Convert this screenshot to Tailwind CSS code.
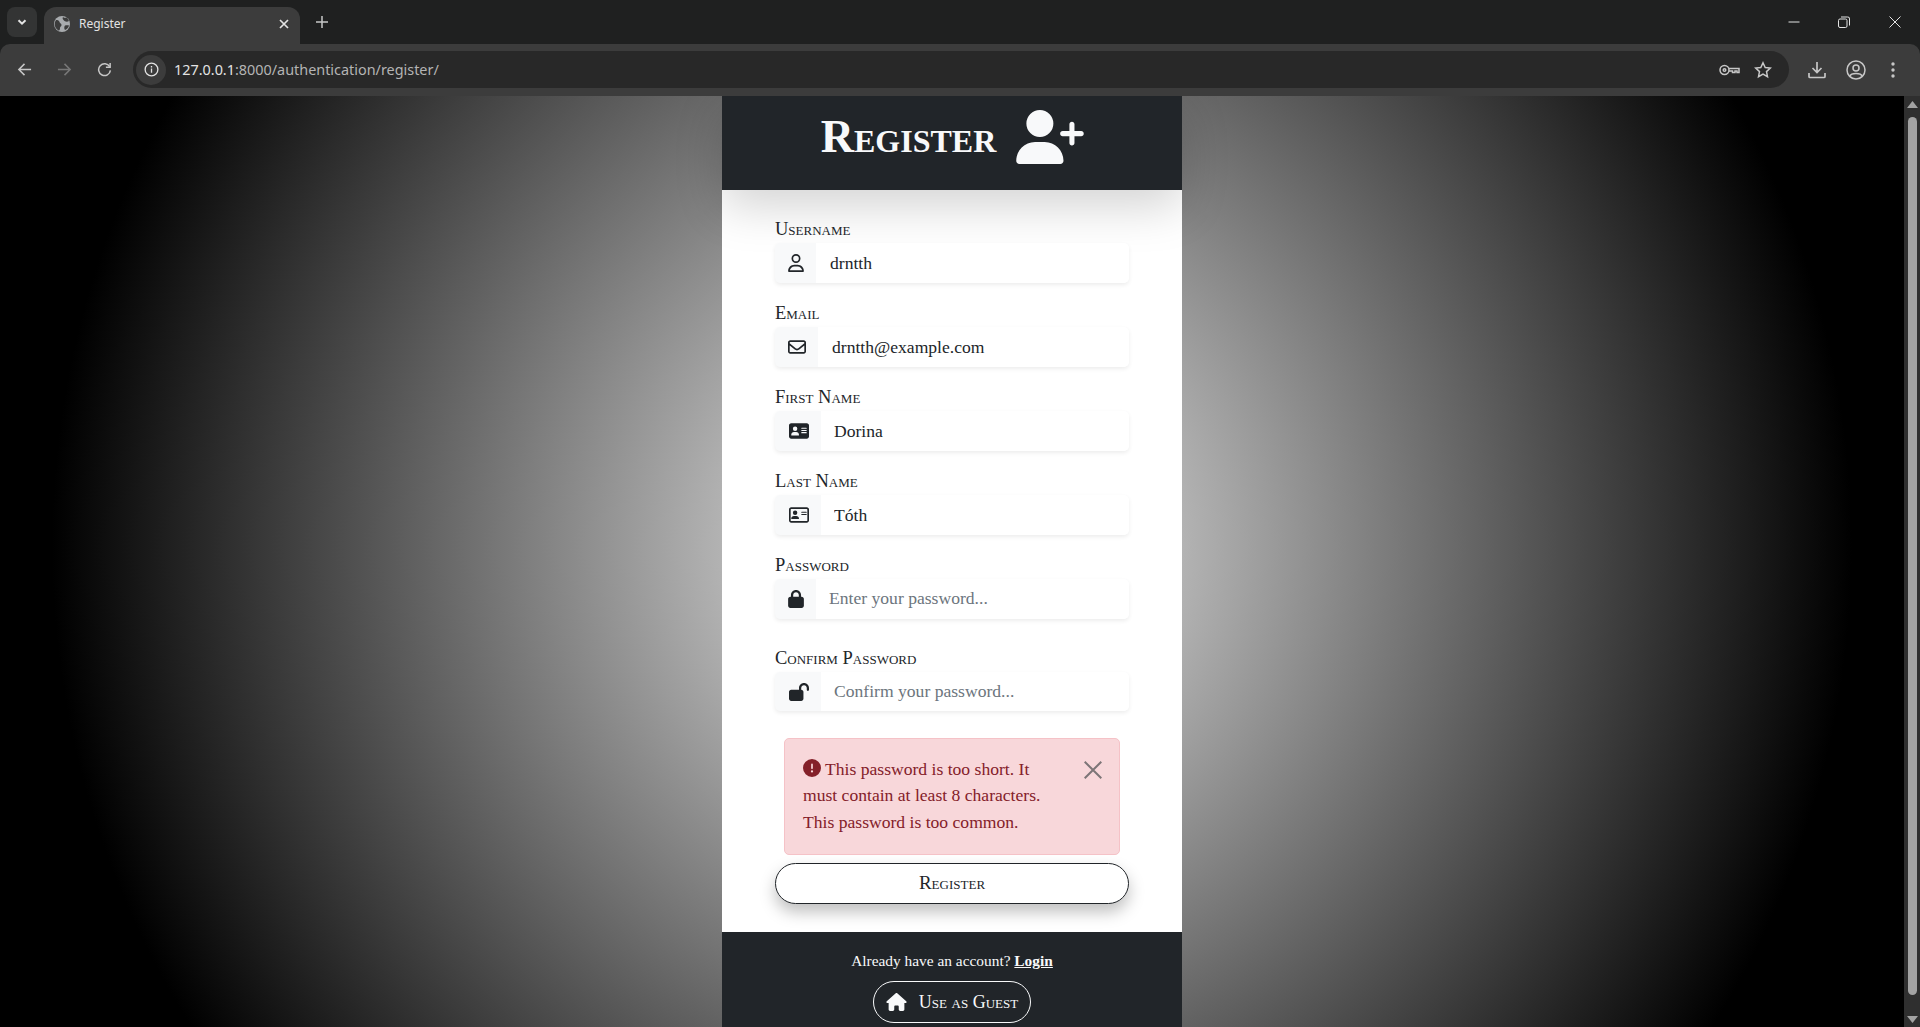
<!DOCTYPE html>
<html lang="en">
<head>
<meta charset="utf-8">
<title>Register</title>
<script src="https://cdn.jsdelivr.net/npm/@tailwindcss/browser@4"></script>
</head>
<body class="h-[1027px] w-[1920px] overflow-hidden bg-black font-['Liberation_Serif',serif]">
<div class="flex h-[1027px] flex-col">
  <!-- browser chrome -->
  <header class="h-[96px] shrink-0 bg-[#1f2020] font-['Noto_Sans',sans-serif] text-[#c7c7c7]">
    <div class="flex h-[44px] items-end pl-[7px]">
      <div class="mb-[7px] flex h-[30px] w-[30px] items-center justify-center rounded-lg bg-[#333434]">
        <svg class="h-3 w-3" viewBox="0 0 12 12" fill="none" stroke="#e3e3e3" stroke-width="2"><path d="M2.5 4.2 6 7.7l3.5-3.5"/></svg>
      </div>
      <div class="ml-[7px] flex h-[37px] w-[256px] items-center rounded-t-xl bg-[#3c3c3c] pb-[4px] pl-[10px] pr-[10px]">
        <svg class="h-4 w-4 shrink-0" viewBox="0 0 16 16"><circle cx="8" cy="8" r="8" fill="#a8abae"/><path d="M2 4c2 0 3 .5 3.500 2s2 1.500 2 3-1.500 1.500-1.500 3-.5 3-1.500 2.500C2 13 0 10 1 6zM9 1c1 1 3 1 4 .5l2 3.500c-1.500 1-3 1-4.500 0C9 4 8 2 9 1zM11 9.500c1.500-.5 3-.5 4 0-.5 2-2 4-4 4.500-1-1-1-3.500 0-4.500z" fill="#3c3c3c"/></svg>
        <span class="ml-[9px] flex-1 text-[12px] text-[#e3e3e3]">Register</span>
        <svg class="h-[12px] w-[12px]" viewBox="0 0 12 12" stroke="#e3e3e3" stroke-width="1.700"><path d="M2 2l8 8M10 2l-8 8"/></svg>
      </div>
      <svg class="mb-[15px] ml-[15px] h-[14px] w-[14px]" viewBox="0 0 14 14" stroke="#c7c7c7" stroke-width="1.500"><path d="M7 1v12M1 7h12"/></svg>
      <div class="ml-auto mb-[16px] flex items-center">
        <svg class="mr-[38px] h-3 w-3" viewBox="0 0 12 12" stroke="#e3e3e3" stroke-width="1"><path d="M.5 6h11"/></svg>
        <svg class="mr-[39px] h-3 w-3" viewBox="0 0 12 12" fill="none" stroke="#e3e3e3" stroke-width="1"><rect x=".5" y="3" width="8.500" height="8.500" rx="1.500"/><path d="M3 1h6.500A1.800 1.800 0 0 1 11.500 3v6.500"/></svg>
        <svg class="mr-[19px] h-3 w-3" viewBox="0 0 12 12" stroke="#e3e3e3" stroke-width="1"><path d="M.5.500l11 11M11.500.500l-11 11"/></svg>
      </div>
    </div>
    <div class="flex h-[52px] items-start rounded-t-[10px] bg-[#3c3c3c] pt-[7px]">
      <div class="flex h-[37px] w-[133px] shrink-0 items-center">
        <svg class="ml-[17px] h-[15px] w-[15px]" viewBox="0 0 16 16" fill="none" stroke="#c7c7c7" stroke-width="1.600"><path d="M15 8H2M8 2 2 8l6 6"/></svg>
        <svg class="ml-[25px] h-[15px] w-[15px]" viewBox="0 0 16 16" fill="none" stroke="#777" stroke-width="1.600"><path d="M1 8h13M8 2l6 6-6 6"/></svg>
        <svg class="ml-[25px] h-[15px] w-[15px]" viewBox="0 0 16 16" fill="none" stroke="#c7c7c7" stroke-width="1.600"><path d="M13.500 5A6.300 6.300 0 1 0 14.300 9"/><path d="M14 1v4.500H9.500"/></svg>
      </div>
      <div class="flex h-[37px] w-[1656px] shrink-0 items-center rounded-full bg-[#282828] pl-[3px]">
        <div class="flex h-[30px] w-[30px] items-center justify-center rounded-full bg-[#3c3c3c]">
          <svg class="h-[15px] w-[15px]" viewBox="0 0 16 16" fill="none" stroke="#e3e3e3" stroke-width="1.400"><circle cx="8" cy="8" r="6.800"/><path d="M8 7v4.500M8 4.200v1.600"/></svg>
        </div>
        <span class="ml-[8px] text-[14.400px] text-[#e3e3e3]">127.0.0.1<span class="text-[#b4b4b4]">:8000/authentication/register/</span></span>
        <svg class="ml-auto h-[14px] w-[21px]" viewBox="0 0 21 14" fill="none" stroke="#c7c7c7" stroke-width="1.500"><circle cx="5.500" cy="7" r="4.500"/><circle cx="5.500" cy="7" r="1.300"/><path d="M10 5.500h10v4h-2V8h-2v1.500h-2.500V8H10"/></svg>
        <svg class="ml-[14px] mr-[17px] h-[18px] w-[18px]" viewBox="0 0 18 18" fill="none" stroke="#c7c7c7" stroke-width="1.500"><path d="m9 1.800 2.200 4.700 5.100.6-3.800 3.500 1 5.100L9 13.200l-4.500 2.500 1-5.100-3.800-3.500 5.100-.6z"/></svg>
      </div>
      <div class="flex h-[37px] flex-1 items-center">
        <svg class="ml-[19px] h-[18px] w-[18px]" viewBox="0 0 18 18" fill="none" stroke="#c7c7c7" stroke-width="1.700"><path d="M9 1v10M4.500 7 9 11.500 13.500 7M1 12v3.500a1 1 0 0 0 1 1h14a1 1 0 0 0 1-1V12"/></svg>
        <svg class="ml-[20px] h-[20px] w-[20px]" viewBox="0 0 20 20" fill="none" stroke="#c7c7c7" stroke-width="1.500"><circle cx="10" cy="10" r="9"/><circle cx="10" cy="8" r="3"/><path d="M4 16c1-3.500 11-3.500 12 0"/></svg>
        <svg class="ml-[25px] h-[18px] w-[4px]" viewBox="0 0 4 18" fill="#c7c7c7"><circle cx="2" cy="3" r="1.700"/><circle cx="2" cy="9" r="1.700"/><circle cx="2" cy="15" r="1.700"/></svg>
      </div>
    </div>
  </header>

  <div class="flex min-h-0 flex-1">
    <!-- page -->
    <main class="flex min-w-0 flex-1 justify-center overflow-hidden bg-[radial-gradient(circle_900px_at_952px_450px,#f0f0f0_0%,#000000_100%)]">
      <section class="flex h-[1000px] w-[460px] shrink-0 flex-col bg-white text-[#212529] [font-size:17.6px]">
        <div class="relative z-10 flex h-[94px] shrink-0 items-center justify-center gap-[20px] bg-[#212529] pb-[13px] pl-[1px] text-[#f8f9fa] shadow-[0_16px_48px_rgba(0,0,0,0.175)]">
          <h1 class="text-[46px] font-bold leading-none [font-variant-caps:small-caps]">Register</h1>
          <svg class="h-[54px] w-[68px]" viewBox="0 0 640 512" fill="currentColor"><path d="M96 128a128 128 0 1 1 256 0A128 128 0 1 1 96 128zM0 482.300C0 383.800 79.800 304 178.300 304h91.400C368.200 304 448 383.800 448 482.300c0 16.400-13.300 29.700-29.700 29.700H29.700C13.300 512 0 498.700 0 482.300zM504 312V248H440c-13.300 0-24-10.700-24-24s10.700-24 24-24h64V136c0-13.300 10.700-24 24-24s24 10.700 24 24v64h64c13.300 0 24 10.700 24 24s-10.700 24-24 24H552v64c0 13.300-10.700 24-24 24s-24-10.700-24-24z"/></svg>
        </div>

        <form class="relative z-20 flex h-[742px] shrink-0 flex-col px-[53px] pt-[29px]">
          <label class="block h-[24px] text-[18.500px] leading-[21px] [font-variant-caps:small-caps]">Username</label>
          <div class="flex h-[40px] rounded-[5px] bg-[#f8f9fa] shadow-[0_2px_4px_rgba(0,0,0,0.075)]">
            <span class="flex w-[41px] shrink-0 items-center justify-center pl-[1px]">
              <svg class="h-[18px] w-[16px]" viewBox="0 0 448 512" fill="currentColor"><path d="M304 128a80 80 0 1 0 -160 0 80 80 0 1 0 160 0zM96 128a128 128 0 1 1 256 0A128 128 0 1 1 96 128zM49.300 464H398.700c-8.900-63.300-63.300-112-129-112H178.300c-65.700 0-120.100 48.700-129 112zM0 482.300C0 383.800 79.800 304 178.300 304h91.400C368.200 304 448 383.800 448 482.300c0 16.400-13.300 29.700-29.700 29.700H29.700C13.300 512 0 498.700 0 482.300z"/></svg>
            </span>
            <input class="min-w-0 flex-1 rounded-r-[5px] bg-white px-[14px] outline-none" value="drntth" aria-label="Username">
          </div>

          <label class="mt-[20px] block h-[24px] text-[18.500px] leading-[21px] [font-variant-caps:small-caps]">Email</label>
          <div class="flex h-[40px] rounded-[5px] bg-[#f8f9fa] shadow-[0_2px_4px_rgba(0,0,0,0.075)]">
            <span class="flex w-[43px] shrink-0 items-center justify-center pl-[1px]">
              <svg class="h-[18px] w-[18px]" viewBox="0 0 512 512" fill="currentColor"><path d="M64 112c-8.800 0-16 7.200-16 16v22.100L220.500 291.700c20.700 17 50.400 17 71.100 0L464 150.100V128c0-8.800-7.200-16-16-16H64zM48 212.200V384c0 8.800 7.200 16 16 16H448c8.800 0 16-7.200 16-16V212.200L322 328.800c-38.400 31.500-93.700 31.500-132 0L48 212.200zM0 128C0 92.700 28.700 64 64 64H448c35.300 0 64 28.700 64 64V384c0 35.300-28.700 64-64 64H64c-35.300 0-64-28.700-64-64V128z"/></svg>
            </span>
            <input class="min-w-0 flex-1 rounded-r-[5px] bg-white px-[14px] outline-none" value="drntth@example.com" aria-label="Email">
          </div>

          <label class="mt-[20px] block h-[24px] text-[18.500px] leading-[21px] [font-variant-caps:small-caps]">First Name</label>
          <div class="flex h-[40px] rounded-[5px] bg-[#f8f9fa] shadow-[0_2px_4px_rgba(0,0,0,0.075)]">
            <span class="flex w-[46px] shrink-0 items-center justify-center pl-[1px]">
              <svg class="h-[18px] w-[20px]" viewBox="0 0 576 512" fill="currentColor"><path d="M64 32C28.700 32 0 60.700 0 96v320c0 35.300 28.700 64 64 64H512c35.300 0 64-28.700 64-64V96c0-35.300-28.700-64-64-64H64zm80 256h64c44.200 0 80 35.800 80 80c0 8.800-7.200 16-16 16H80c-8.800 0-16-7.200-16-16c0-44.200 35.800-80 80-80zm-32-96a64 64 0 1 1 128 0 64 64 0 1 1 -128 0zm256-32H496c8.800 0 16 7.200 16 16s-7.200 16-16 16H368c-8.800 0-16-7.200-16-16s7.200-16 16-16zm0 64H496c8.800 0 16 7.200 16 16s-7.200 16-16 16H368c-8.800 0-16-7.200-16-16s7.200-16 16-16zm0 64H496c8.800 0 16 7.200 16 16s-7.200 16-16 16H368c-8.800 0-16-7.200-16-16s7.200-16 16-16z"/></svg>
            </span>
            <input class="min-w-0 flex-1 rounded-r-[5px] bg-white px-[13px] outline-none" value="Dorina" aria-label="First Name">
          </div>

          <label class="mt-[20px] block h-[24px] text-[18.500px] leading-[21px] [font-variant-caps:small-caps]">Last Name</label>
          <div class="flex h-[40px] rounded-[5px] bg-[#f8f9fa] shadow-[0_2px_4px_rgba(0,0,0,0.075)]">
            <span class="flex w-[46px] shrink-0 items-center justify-center pl-[1px]">
              <svg class="h-[18px] w-[20px]" viewBox="0 0 576 512" fill="currentColor"><path d="M64 80h448c8.800 0 16 7.200 16 16v320c0 8.800-7.200 16-16 16H64c-8.800 0-16-7.200-16-16V96c0-8.800 7.200-16 16-16zm0-48C28.700 32 0 60.700 0 96v320c0 35.300 28.700 64 64 64h448c35.300 0 64-28.700 64-64V96c0-35.300-28.700-64-64-64H64z" fill-rule="evenodd"/><path d="M144 288h64c44.200 0 80 28 80 68c0 8.800-7.200 16-16 16H80c-8.800 0-16-7.200-16-16c0-40 35.800-68 80-68zm-32-96a64 64 0 1 1 128 0 64 64 0 1 1 -128 0zm256-32h128c8.800 0 16 7.200 16 16s-7.200 16-16 16H368c-8.800 0-16-7.200-16-16s7.200-16 16-16zm0 64h128c8.800 0 16 7.200 16 16s-7.200 16-16 16H368c-8.800 0-16-7.200-16-16s7.200-16 16-16z"/></svg>
            </span>
            <input class="min-w-0 flex-1 rounded-r-[5px] bg-white px-[13px] outline-none" value="Tóth" aria-label="Last Name">
          </div>

          <label class="mt-[20px] block h-[24px] text-[18.500px] leading-[21px] [font-variant-caps:small-caps]">Password</label>
          <div class="flex h-[40px] rounded-[5px] bg-[#f8f9fa] shadow-[0_2px_4px_rgba(0,0,0,0.075)]">
            <span class="flex w-[41px] shrink-0 items-center justify-center pl-[1px]">
              <svg class="h-[18px] w-[16px]" viewBox="0 0 448 512" fill="currentColor"><path d="M144 144v48H304V144c0-44.200-35.800-80-80-80s-80 35.800-80 80zM80 192V144C80 64.500 144.500 0 224 0s144 64.500 144 144v48h16c35.300 0 64 28.700 64 64V448c0 35.300-28.700 64-64 64H64c-35.300 0-64-28.700-64-64V256c0-35.300 28.700-64 64-64H80z"/></svg>
            </span>
            <input class="min-w-0 flex-1 rounded-r-[5px] bg-white px-[13px] pb-[2px] outline-none placeholder:text-[#6c757d]" placeholder="Enter your password..." aria-label="Password">
          </div>

          <label class="mt-[29px] block h-[24px] text-[18.500px] leading-[21px] [font-variant-caps:small-caps]">Confirm Password</label>
          <div class="flex h-[39px] rounded-[5px] bg-[#f8f9fa] shadow-[0_2px_4px_rgba(0,0,0,0.075)]">
            <span class="flex w-[46px] shrink-0 items-center justify-center pl-[1px]">
              <svg class="h-[18px] w-[20px]" viewBox="0 0 576 512" fill="currentColor"><path d="M352 144c0-44.200 35.800-80 80-80s80 35.800 80 80v48c0 17.700 14.300 32 32 32s32-14.300 32-32V144C576 64.500 511.500 0 432 0S288 64.500 288 144v48H64c-35.300 0-64 28.700-64 64V448c0 35.300 28.700 64 64 64H352c35.300 0 64-28.700 64-64V256c0-35.300-28.700-64-64-64H352V144z"/></svg>
            </span>
            <input class="min-w-0 flex-1 rounded-r-[5px] bg-white px-[13px] outline-none placeholder:text-[#6c757d]" placeholder="Confirm your password..." aria-label="Confirm Password">
          </div>

          <div class="relative mx-[9px] mt-[27px] h-[117px] rounded-[5px] border border-[#f5c2c7] bg-[#f8d7da] pl-[18px] pt-[17px] leading-[26.400px] text-[#842029]">
            <p class="w-[260px]"><svg class="mr-[4px] inline-block h-[18px] w-[18px] -translate-y-[1px] align-[-3px]" viewBox="0 0 512 512" fill="currentColor"><path d="M256 512A256 256 0 1 0 256 0a256 256 0 1 0 0 512zm0-384c13.300 0 24 10.700 24 24V264c0 13.300-10.700 24-24 24s-24-10.700-24-24V152c0-13.300 10.700-24 24-24zM224 352a32 32 0 1 1 64 0 32 32 0 1 1 -64 0z"/></svg>This password is too short. It must contain at least 8 characters.</p>
            <p>This password is too common.</p>
            <svg class="absolute right-[17px] top-[22px] h-[18px] w-[18px]" viewBox="0 0 18 18" stroke="#7d7577" stroke-width="2"><path d="M.7.700l16.600 16.600M17.300.700.700 17.300"/></svg>
          </div>

          <button type="button" class="mt-[8px] h-[41px] w-full rounded-full border border-[#212529] bg-white text-[19px] text-[#212529] shadow-[0_8px_16px_rgba(0,0,0,0.25)] [font-variant-caps:small-caps]">Register</button>
        </form>

        <footer class="flex h-[164px] shrink-0 flex-col items-center bg-[#212529] pt-[17px] text-[15.400px] leading-[24px] text-[#f8f9fa]">
          <p>Already have an account? <a class="font-bold underline">Login</a></p>
          <a class="mt-[8px] flex h-[42px] w-[158px] items-center justify-center gap-[12px] rounded-full border border-[#f8f9fa] text-[18px] [font-variant-caps:small-caps]">
            <svg class="h-[18px] w-[21px]" viewBox="0 0 576 512" fill="currentColor"><path d="M575.800 255.500c0 18-15 32.100-32 32.100h-32l.7 160.200c0 2.700-.2 5.400-.5 8.100V472c0 22.100-17.900 40-40 40H456c-1.100 0-2.200 0-3.300-.1c-1.400 .1-2.800 .1-4.200 .1H416 392c-22.100 0-40-17.900-40-40V448 384c0-17.700-14.300-32-32-32H256c-17.700 0-32 14.300-32 32v64 24c0 22.100-17.900 40-40 40H160 128.100c-1.500 0-3-.1-4.500-.2c-1.200 .1-2.400 .2-3.600 .2H104c-22.100 0-40-17.900-40-40V360c0-.9 0-1.900 .1-2.800V287.600H32c-18 0-32-14-32-32.100c0-9 3-17 10-24L266.400 8c7-7 15-8 22-8s15 2 21 7L564.800 231.500c8 7 12 15 11 24z"/></svg>
            Use as Guest
          </a>
        </footer>
      </section>
    </main>
    <!-- scrollbar -->
    <aside class="flex w-[16px] shrink-0 flex-col items-center bg-[#2f2f2f] pt-[5px] pb-[4px]">
      <svg class="h-[7px] w-[11px] shrink-0" viewBox="0 0 11 7" fill="#a3a3a3"><path d="M5.500 0 11 7H0z"/></svg>
      <div class="mt-[9px] h-[878px] w-[9px] shrink-0 rounded-full bg-[#a3a3a3]"></div>
      <svg class="mt-auto h-[7px] w-[11px] shrink-0" viewBox="0 0 11 7" fill="#a3a3a3"><path d="M5.500 7 11 0H0z"/></svg>
    </aside>
  </div>
</div>
</body>
</html>
